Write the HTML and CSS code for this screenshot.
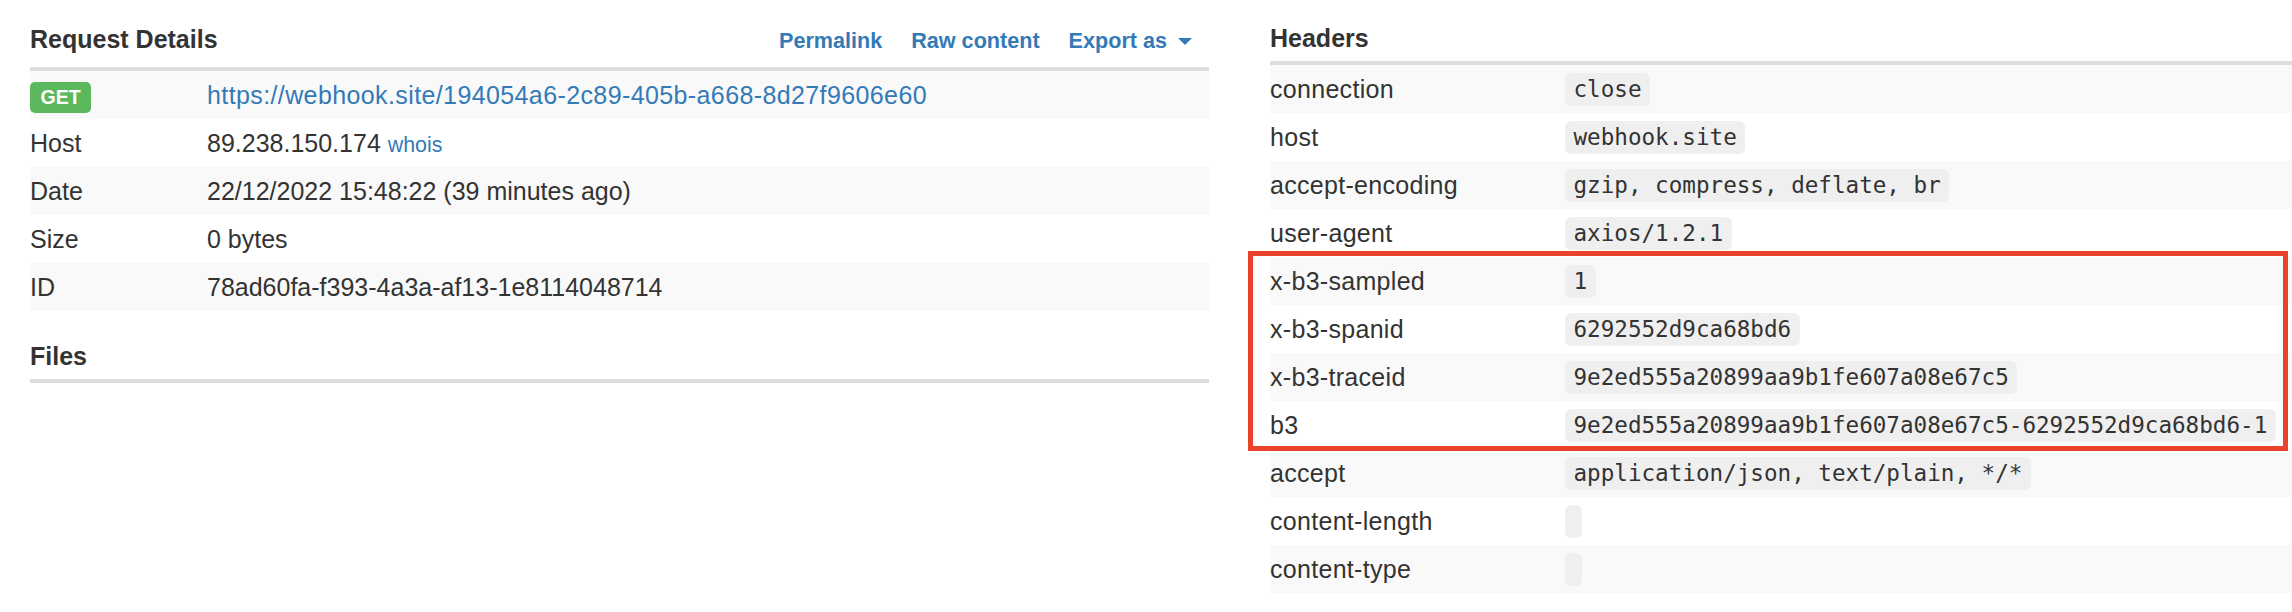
FILE: index.html
```html
<!DOCTYPE html>
<html lang="en">
<head>
<meta charset="utf-8">
<title>Request Details</title>
<link rel="stylesheet" href="styles.css">
</head>
<body>
<div class="page">
  <section class="col col-left">
    <div class="head head-main">
      <h2 class="title">Request Details</h2>
      <nav class="actions">
        <a class="act" href="#">Permalink</a>
        <a class="act" href="#">Raw content</a>
        <a class="act" href="#">Export as <span class="caret"></span></a>
      </nav>
    </div>
    <div class="rows">
      <div class="row"><div class="k"><span class="badge">GET</span></div><div class="v"><a class="link" href="#">https://webhook.site/194054a6-2c89-405b-a668-8d27f9606e60</a></div></div>
      <div class="row"><div class="k">Host</div><div class="v">89.238.150.174 <a class="small-link" href="#">whois</a></div></div>
      <div class="row"><div class="k">Date</div><div class="v">22/12/2022 15:48:22 (39 minutes ago)</div></div>
      <div class="row"><div class="k">Size</div><div class="v">0 bytes</div></div>
      <div class="row"><div class="k">ID</div><div class="v">78ad60fa-f393-4a3a-af13-1e8114048714</div></div>
    </div>
    <div class="head head-files">
      <h2 class="title">Files</h2>
    </div>
  </section>

  <section class="col col-right">
    <div class="head head-side">
      <h2 class="title">Headers</h2>
    </div>
    <div class="rows">
      <div class="row hrow"><div class="hk">connection</div><div class="hv"><code class="code">close</code></div></div>
      <div class="row hrow"><div class="hk">host</div><div class="hv"><code class="code">webhook.site</code></div></div>
      <div class="row hrow"><div class="hk">accept-encoding</div><div class="hv"><code class="code">gzip, compress, deflate, br</code></div></div>
      <div class="row hrow"><div class="hk">user-agent</div><div class="hv"><code class="code">axios/1.2.1</code></div></div>
      <div class="row hrow"><div class="hk">x-b3-sampled</div><div class="hv"><code class="code">1</code></div></div>
      <div class="row hrow"><div class="hk">x-b3-spanid</div><div class="hv"><code class="code">6292552d9ca68bd6</code></div></div>
      <div class="row hrow"><div class="hk">x-b3-traceid</div><div class="hv"><code class="code">9e2ed555a20899aa9b1fe607a08e67c5</code></div></div>
      <div class="row hrow"><div class="hk">b3</div><div class="hv"><code class="code">9e2ed555a20899aa9b1fe607a08e67c5-6292552d9ca68bd6-1</code></div></div>
      <div class="row hrow"><div class="hk">accept</div><div class="hv"><code class="code">application/json, text/plain, */*</code></div></div>
      <div class="row hrow"><div class="hk">content-length</div><div class="hv"><code class="code"></code></div></div>
      <div class="row hrow"><div class="hk">content-type</div><div class="hv"><code class="code"></code></div></div>
    </div>
    <div class="highlight"></div>
  </section>
</div>
</body>
</html>
```

FILE: styles.css
```css
html, body {
  margin: 0;
  padding: 0;
  background: #ffffff;
  overflow: hidden;
}

body {
  font-family: "Liberation Sans", Arial, Helvetica, sans-serif;
  font-size: 25px;
  color: #333333;
}

.page {
  display: grid;
  grid-template-columns: 1179px 1180px;
  column-gap: 61px;
  padding-left: 30px;
  width: max-content;
}

.col {
  min-width: 0;
}

.col-right {
  position: relative;
}

.head {
  display: flex;
  align-items: baseline;
  justify-content: space-between;
  border-bottom: 4px solid #dddddd;
}

.head-main {
  padding: 25px 17px 12px 0;
}

.head-side {
  padding: 24px 0 9px 0;
}

.head-files {
  margin-top: 31px;
  padding: 0 0 9px 0;
}

.title {
  margin: 0;
  font-size: 25px;
  line-height: 28px;
  font-weight: bold;
  color: #333333;
}

.actions {
  display: flex;
  align-items: baseline;
  gap: 29px;
}

.act {
  font-size: 21.6px;
  line-height: 28px;
  font-weight: bold;
  color: #337ab7;
  text-decoration: none;
  white-space: nowrap;
}

.caret {
  display: inline-block;
  width: 0;
  height: 0;
  margin-left: 5px;
  vertical-align: 3px;
  border-top: 7px solid #337ab7;
  border-left: 7.5px solid transparent;
  border-right: 7.5px solid transparent;
}

.rows {
  display: flex;
  flex-direction: column;
}

.row {
  display: flex;
  height: 48px;
  box-sizing: border-box;
  line-height: 28px;
  white-space: nowrap;
}

.row:nth-child(odd) {
  background: #f9f9f9;
}

.k {
  width: 177px;
  flex: none;
  padding-top: 10px;
}

.v {
  flex: 1;
  padding-top: 10px;
}

.badge {
  display: inline-block;
  padding: 5px 10.5px 6px;
  font-size: 19.5px;
  line-height: 20px;
  font-weight: bold;
  color: #ffffff;
  background: #5cb85c;
  border-radius: 5px;
}

.link {
  color: #337ab7;
  text-decoration: none;
  letter-spacing: 0.39px;
}

.small-link {
  font-size: 21.4px;
  color: #337ab7;
  text-decoration: none;
}

.hk {
  width: 295px;
  flex: none;
  padding-top: 10px;
  letter-spacing: 0.3px;
}

.hv {
  flex: 1;
  display: flex;
  align-items: flex-start;
  padding-top: 8px;
}

.code {
  display: block;
  height: 33px;
  padding: 0 8.5px;
  box-sizing: border-box;
  min-width: 17px;
  font-family: "DejaVu Sans Mono", "Liberation Mono", monospace;
  font-size: 22.6px;
  line-height: 33px;
  color: #333333;
  background: #efefef;
  border-radius: 6px;
}

.highlight {
  position: absolute;
  left: -22px;
  top: 251px;
  width: 1040px;
  height: 200px;
  box-sizing: border-box;
  border: 5px solid #e9432b;
  pointer-events: none;
}
```
